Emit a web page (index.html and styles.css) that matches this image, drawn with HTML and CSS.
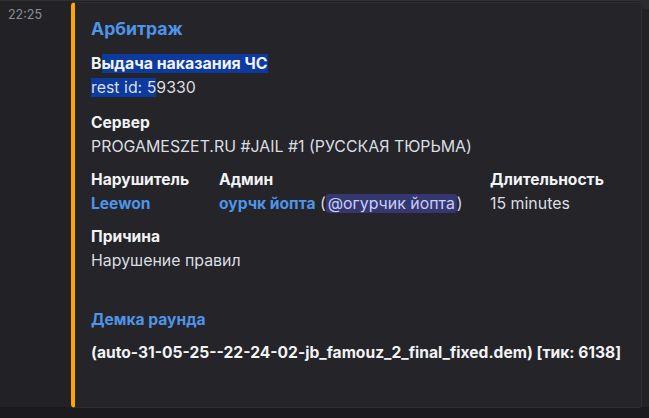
FILE: index.html
```html
<!DOCTYPE html>
<html lang="ru">
<head>
<meta charset="utf-8">
<link rel="stylesheet" href="styles.css">
</head>
<body>
<div class="row">
  <div class="time">22:25</div>
  <div class="embed">
    <div class="title">Арбитраж</div>
    <div class="desc">
      <div class="desc-line"><strong>В<span class="sel">ыдача наказания ЧС</span></strong></div>
      <div class="desc-line"><span class="sel">rest id: 5</span>9330</div>
    </div>
    <div class="field">
      <div class="fname">Сервер</div>
      <div class="fvalue">PROGAMESZET.RU #JAIL #1 (РУССКАЯ ТЮРЬМА)</div>
    </div>
    <div class="inline-fields">
      <div class="field">
        <div class="fname">Нарушитель</div>
        <div class="fvalue"><span class="link">Leewon</span></div>
      </div>
      <div class="field">
        <div class="fname">Админ</div>
        <div class="fvalue"><span class="link">оурчк йопта</span> (<span class="mention">@огурчик йопта</span>)</div>
      </div>
      <div class="field">
        <div class="fname">Длительность</div>
        <div class="fvalue">15 minutes</div>
      </div>
    </div>
    <div class="field">
      <div class="fname">Причина</div>
      <div class="fvalue">Нарушение правил</div>
    </div>
    <div class="field demo">
      <div class="fname link">Демка раунда</div>
    </div>
    <div class="field file">
      <div class="fname">(auto-31-05-25--22-24-02-jb_famouz_2_final_fixed.dem) [тик: 6138]</div>
    </div>
  </div>
  <div class="corner"></div>
</div>
</body>
</html>
```
FILE: styles.css
```css
html, body {
  margin: 0;
  padding: 0;
}
body {
  background: #1b1b1f;
  font-family: Inter, "Noto Sans", sans-serif;
  color: #dbdee1;
  width: 649px;
  height: 418px;
  overflow: hidden;
}
.row {
  position: relative;
  display: flex;
  height: 407px;
  padding-top: 1px;
  background: #222226;
  border-top: 1px solid #2f2f34;
  box-sizing: border-box;
}
.time {
  width: 63px;
  padding-left: 8px;
  padding-top: 5px;
  font-size: 12.5px;
  line-height: 16px;
  color: #8b8e96;
}
.embed {
  width: 571px;
  box-sizing: border-box;
  background: #242429;
  border: 1px solid #2e2e33;
  border-left: 4px solid #ffa500;
  border-radius: 4px;
  padding: 13px 16px 0 16px;
  height: 406px;
}
.title {
  font-size: 17.6px;
  font-weight: 700;
  line-height: 26px;
  color: #4f94e8;
}
.desc {
  margin-top: 10px;
  font-size: 15.9px;
  line-height: 24px;
}
.desc strong {
  color: #f2f3f5;
  font-size: 15.9px;
}
.sel {
  background: #0c3a9f;
}
.field {
  font-size: 15.9px;
  line-height: 24px;
  margin-top: 9px;
}
.desc + .field {
  margin-top: 11px;
}
.fname {
  font-weight: 700;
  font-size: 15.6px;
  color: #f2f3f5;
}
.fvalue {
  color: #dbdee1;
}
.link {
  color: #4f94e8;
  font-weight: 700;
  font-size: 15.6px;
}
.fname.link {
  color: #4f94e8;
}
.inline-fields {
  display: grid;
  grid-template-columns: 128px 271px auto;
  margin-top: 9px;
}
.inline-fields .field {
  margin-top: 0;
}
.mention {
  background: #35386f;
  color: #c9cdfb;
  border-radius: 3px;
  padding: 0 2px;
}
.field.demo {
  margin-top: 35px;
}
.field.file {
  margin-top: 9px;
}
.corner {
  position: absolute;
  right: -6px;
  top: -8px;
  width: 16px;
  height: 16px;
  border-radius: 50%;
  background: #2b2b30;
}
```
